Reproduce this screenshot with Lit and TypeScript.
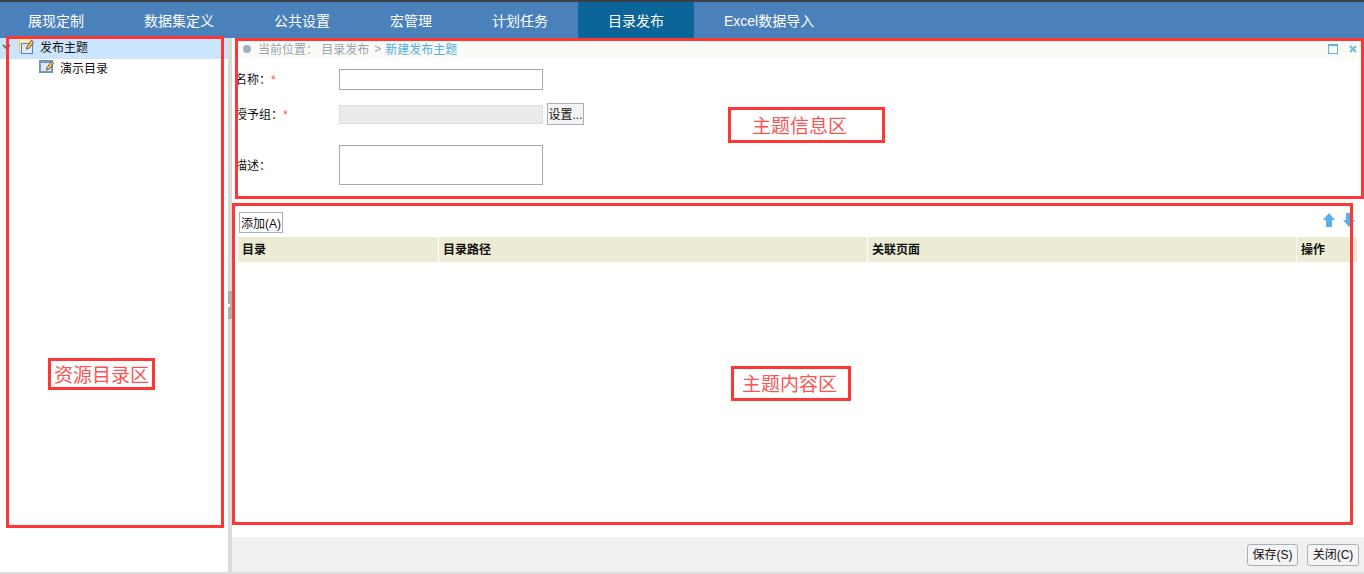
import { LitElement, html, css, svg } from "lit";
import { customElement } from "lit/decorators.js";

const TABS = ["展现定制", "数据集定义", "公共设置", "宏管理", "计划任务", "目录发布", "Excel数据导入"];
const ACTIVE_TAB = "目录发布";

const COLUMNS = [
	{ title: "目录", width: 200 },
	{ title: "目录路径", width: 428 },
	{ title: "关联页面", width: 428 },
	{ title: "操作", width: 60 },
];

// review marks: x, y, w, h and the optional caption with its left inset
const MARKS = [
	{ x: 6, y: 36, w: 218, h: 492 },
	{ x: 235, y: 38, w: 1129, h: 161 },
	{ x: 232, y: 203, w: 1121, h: 322 },
	{ x: 48, y: 358, w: 107, h: 32, text: "资源目录区", inset: 3 },
	{ x: 728, y: 107, w: 157, h: 36, text: "主题信息区", inset: 21 },
	{ x: 731, y: 366, w: 120, h: 35, text: "主题内容区", inset: 8 },
];

const pencil = svg`
	<path d="M8 8.500l4.500-6 2.200 1.600-4.500 6-2.700 1z" fill="#f5c56a" stroke="#6b4a22" stroke-width=".9"/>
`;

const rootIcon = html`
	<svg class="node-icon" width="16" height="16" viewBox="0 0 16 16">
		<rect x=".5" y=".5" width="11" height="14" fill="#fdeeb8" stroke="#f0c95f"/>
		<rect x="2.500" y="5.500" width="11" height="10" fill="#dfe9f7" stroke="#5a80bd"/>
		${pencil}
	</svg>
`;

const leafIcon = html`
	<svg class="node-icon" width="16" height="16" viewBox="0 0 16 16">
		<rect x=".5" y="1.500" width="13" height="12" fill="#6f98d8" stroke="#7d8ea6"/>
		<rect x="2" y="4" width="10" height="8" fill="#dfe9f7"/>
		${pencil}
	</svg>
`;

@customElement("app-root")
export class AppRoot extends LitElement {
	static styles = css`
		:host {
			display: block;
			position: relative;
			height: 574px;
			overflow: hidden;
			font-family: "Liberation Sans", "Noto Sans CJK SC", sans-serif;
			font-size: 12px;
			color: #111;
			background: #fff;
		}

		.page {
			display: flex;
			flex-direction: column;
			height: 572px;
			border-bottom: 2px solid #dddddd;
		}

		.nav {
			display: flex;
			flex: none;
			height: 36px;
			border-top: 2px solid #3a3f47;
			background: #4a81bb;
		}

		.tab {
			display: flex;
			align-items: center;
			padding: 0 30px;
			font-size: 14px;
			color: #fff;
		}

		.tab:first-child {
			margin-left: -2px;
		}

		.tab.active {
			background: #0c6598;
		}

		.body {
			display: flex;
			flex: 1;
			min-height: 0;
		}

		.tree {
			flex: none;
			width: 228px;
		}

		.tree-row {
			display: flex;
			align-items: center;
			box-sizing: border-box;
			height: 20px;
			padding-bottom: 4px;
		}

		.tree-row.selected {
			height: 21px;
			padding-bottom: 5px;
			background: #cbe5fe;
		}

		.twist {
			display: flex;
			box-sizing: border-box;
			width: 19px;
			padding-left: 2px;
		}

		.node-icon {
			flex: none;
			margin-right: 5px;
		}

		.tree-row.child {
			padding-left: 39px;
		}

		.splitter {
			display: flex;
			flex: none;
			align-items: center;
			width: 4px;
			background: #dcdad6;
		}

		.grip {
			display: flex;
			align-items: center;
			width: 4px;
			height: 28px;
			background: #b0aeaa;
		}

		.grip::after {
			content: "";
			width: 2px;
			height: 3px;
			background: #fff;
		}

		.main {
			display: flex;
			flex-direction: column;
			flex: 1;
			min-width: 0;
		}

		.crumb {
			display: flex;
			align-items: center;
			height: 21px;
			margin-left: 6px;
			padding: 0 7px 0 5px;
			background: #fafaf7;
			color: #9aa3aa;
		}

		.dot {
			width: 8px;
			height: 8px;
			margin-right: 7px;
			border-radius: 50%;
			background: #9db0c3;
		}

		.crumb .sep {
			margin: 0 4px 0 5px;
		}

		.crumb .here {
			color: #4fb0e0;
		}

		.win-icons {
			display: flex;
			align-items: center;
			gap: 11px;
			margin-left: auto;
		}

		.form {
			display: grid;
			grid-template-columns: 107px 204px auto;
			justify-content: start;
			align-items: center;
			padding-top: 10px;
		}

		.label {
			padding: 0 0 2px 3px;
			white-space: nowrap;
		}

		.label b {
			font-weight: normal;
			color: #f55;
		}

		.input {
			box-sizing: border-box;
			height: 21px;
			border: 1px solid #a9a9a9;
			background: #fff;
		}

		.input.disabled {
			height: 19px;
			border-color: #dddddd;
			background: #ebebeb;
		}

		.input.area {
			height: 40px;
		}

		.row-two {
			margin-top: 13px;
		}

		.row-three {
			margin-top: 20px;
		}

		.set-btn {
			box-sizing: border-box;
			width: 37px;
			height: 22px;
			margin-left: 4px;
			border: 1px solid #a5b0bd;
			background: #f4f4f4;
			line-height: 23px;
			text-align: center;
			white-space: nowrap;
		}

		.content {
			display: flex;
			flex-direction: column;
			flex: 1;
			min-height: 0;
			margin-top: 27px;
			padding-left: 6px;
		}

		.toolbar {
			display: flex;
			align-items: flex-start;
			height: 21px;
			padding: 0 9px 0 1px;
		}

		.add-btn {
			box-sizing: border-box;
			width: 44px;
			height: 21px;
			border: 1px solid #a5b0bd;
			background: #fff;
			line-height: 22px;
			text-align: center;
			white-space: nowrap;
		}

		.arrows {
			display: flex;
			gap: 8px;
			margin-top: 1px;
			margin-left: auto;
		}

		.thead {
			display: flex;
			gap: 1px;
			width: 1119px;
			margin-top: 4px;
		}

		.th {
			flex: none;
			box-sizing: border-box;
			height: 25px;
			padding-left: 4px;
			line-height: 26px;
			font-weight: bold;
			background: #ecebd4;
		}

		.footer {
			display: flex;
			flex: none;
			align-items: center;
			justify-content: flex-end;
			gap: 9px;
			height: 35px;
			padding-right: 5px;
			background: #f0f0f0;
		}

		.foot-btn {
			box-sizing: border-box;
			width: 51px;
			height: 22px;
			border: 1px solid #a5b0bd;
			border-radius: 3px;
			background: #f4f4f4;
			line-height: 20px;
			text-align: center;
			white-space: nowrap;
		}

		.foot-btn:last-child {
			width: 52px;
		}

		/* red review marks drawn over the screen */
		.mark {
			position: absolute;
			box-sizing: border-box;
			border: 3px solid #ff3636;
		}

		.mark.caption {
			display: flex;
			align-items: center;
			padding-bottom: 2px;
			font-size: 19px;
			white-space: nowrap;
			color: #f75555;
			background: #fff;
		}
	`;

	private renderForm() {
		return html`
			<div class="form">
				<div class="label">名称：<b>*</b></div>
				<div class="input"></div>
				<div></div>
				<div class="label row-two">授予组：<b>*</b></div>
				<div class="input disabled row-two"></div>
				<div class="set-btn row-two">设置...</div>
				<div class="label row-three">描述：</div>
				<div class="input area row-three"></div>
				<div></div>
			</div>
		`;
	}

	render() {
		return html`
			<div class="page">
				<nav class="nav">
					${TABS.map((t) => html`<div class="tab ${t === ACTIVE_TAB ? "active" : ""}">${t}</div>`)}
				</nav>
				<div class="body">
					<aside class="tree">
						<div class="tree-row selected">
							<span class="twist">
								<svg width="9" height="9" viewBox="0 0 9 9">
									<path d="M1 3l3.500 3.500L8 3" fill="none" stroke="#555" stroke-width="1.500"/>
								</svg>
							</span>
							${rootIcon}发布主题
						</div>
						<div class="tree-row child">${leafIcon}演示目录</div>
					</aside>
					<div class="splitter"><div class="grip"></div></div>
					<main class="main">
						<div class="crumb">
							<span class="dot"></span>
							<span>当前位置：&nbsp;目录发布</span>
							<span class="sep">&gt;</span>
							<span class="here">新建发布主题</span>
							<span class="win-icons">
								<svg width="10" height="10" viewBox="0 0 10 10">
									<rect x=".5" y=".5" width="9" height="9" fill="#fff" stroke="#5fb4d8"/>
									<rect x="0" y="0" width="10" height="2" fill="#5fb4d8"/>
								</svg>
								<svg width="8" height="8" viewBox="0 0 8 8">
									<path d="M1 1l6 6M7 1l-6 6" stroke="#6fbfe0" stroke-width="2"/>
								</svg>
							</span>
						</div>
						${this.renderForm()}
						<section class="content">
							<div class="toolbar">
								<div class="add-btn">添加(A)</div>
								<div class="arrows">
									<svg width="12" height="14" viewBox="0 0 12 14">
										<path d="M6 0l6 7H9v7H3V7H0z" fill="#5cb0ea"/>
									</svg>
									<svg width="12" height="14" viewBox="0 0 12 14">
										<path d="M6 14l6-7H9V0H3v7H0z" fill="#5cb0ea"/>
									</svg>
								</div>
							</div>
							<div class="thead">
								${COLUMNS.map(
									(c) => html`<div class="th" style="width:${c.width}px">${c.title}</div>`,
								)}
							</div>
						</section>
						<footer class="footer">
							<div class="foot-btn">保存(S)</div>
							<div class="foot-btn">关闭(C)</div>
						</footer>
					</main>
				</div>
			</div>
			${MARKS.map(
				(m) => html`<div
					class="mark ${m.text ? "caption" : ""}"
					style="left:${m.x}px;top:${m.y}px;width:${m.w}px;height:${m.h}px;padding-left:${m.inset ?? 0}px"
				>${m.text ?? ""}</div>`,
			)}
		`;
	}
}
